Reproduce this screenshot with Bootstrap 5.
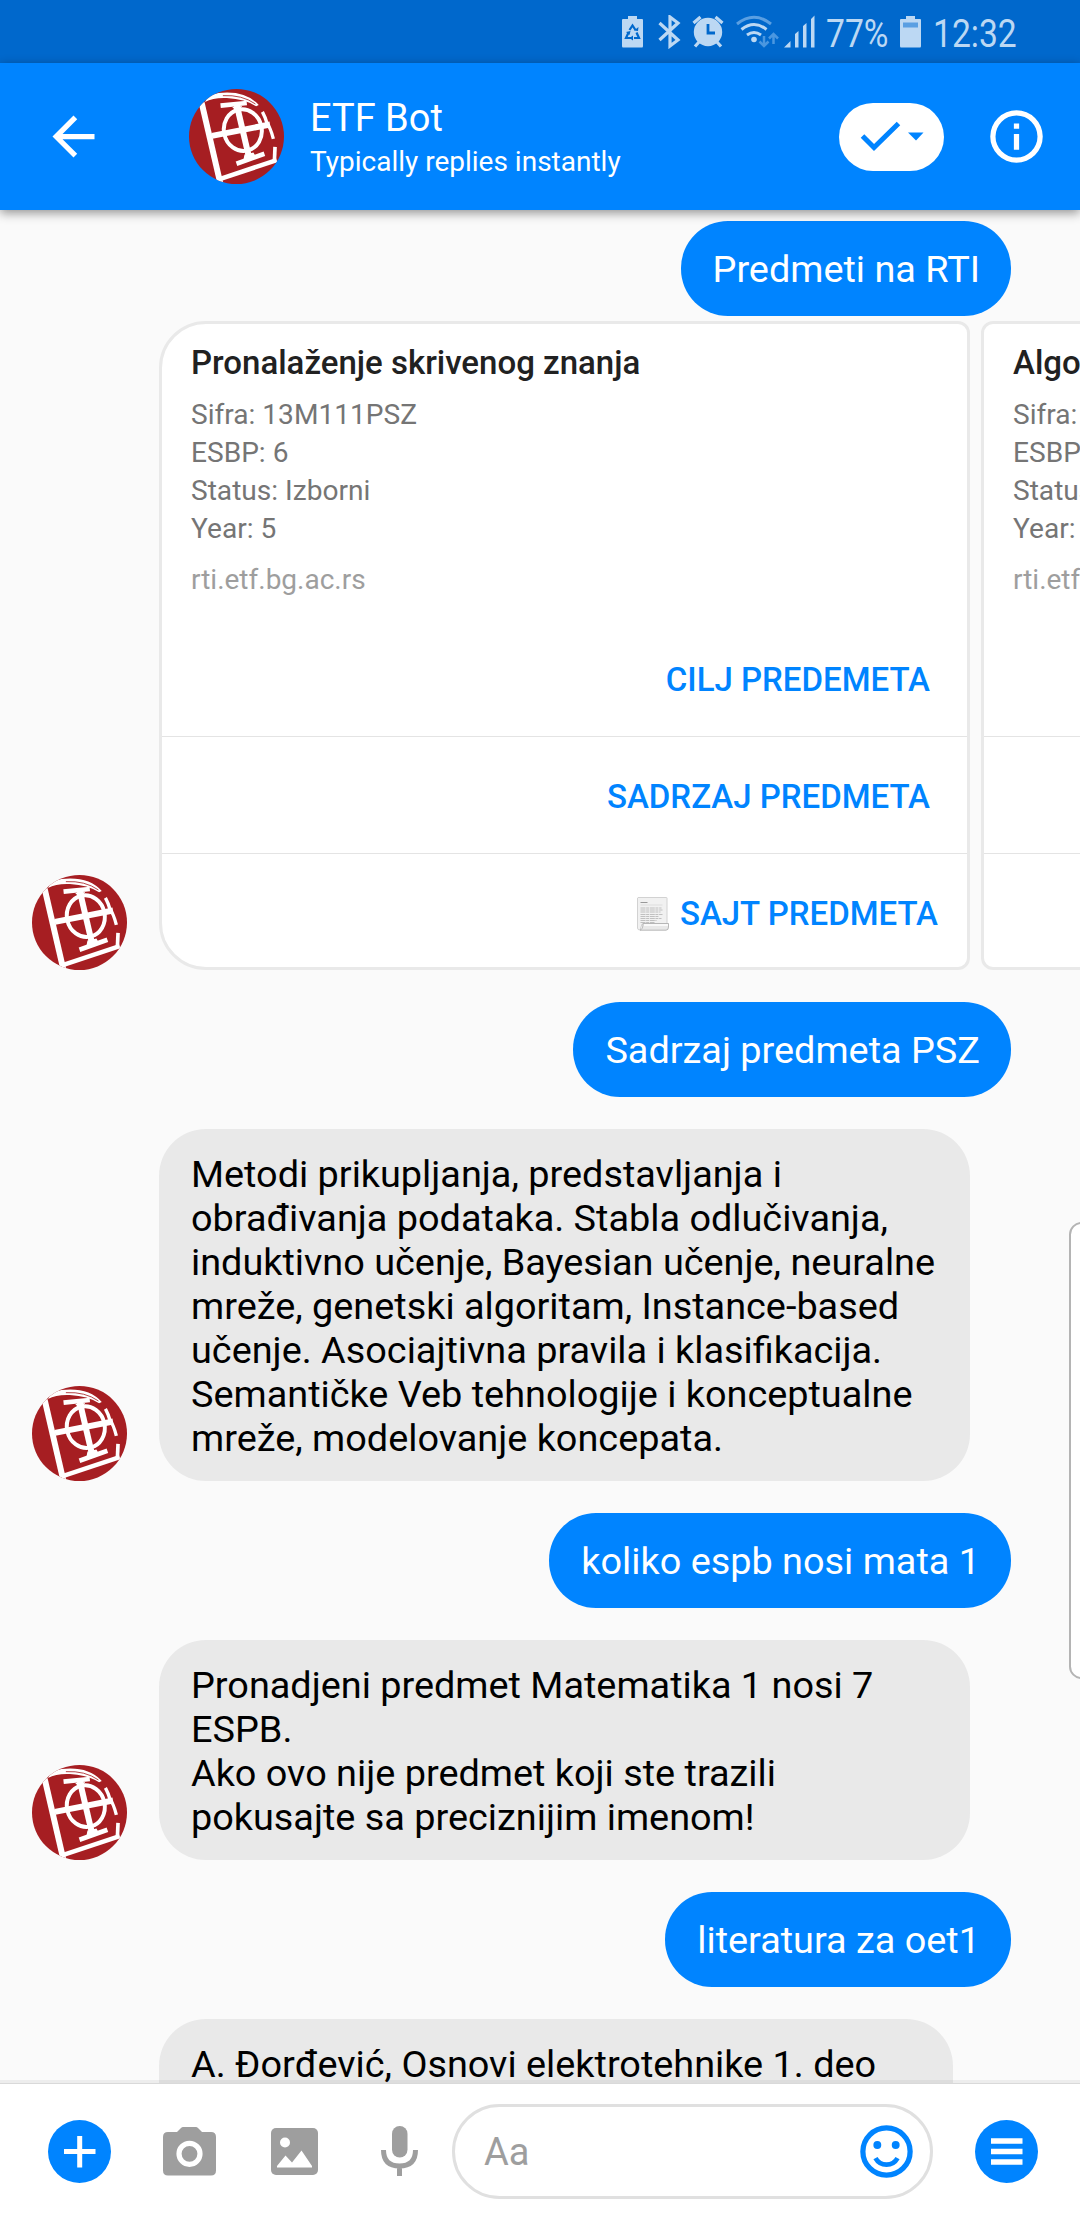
<!DOCTYPE html>
<html lang="sr-Latn">
<head>
<meta charset="utf-8">
<meta name="viewport" content="width=device-width, initial-scale=1">
<title>ETF Bot</title>
<link href="https://cdn.jsdelivr.net/npm/bootstrap@5.3.0/dist/css/bootstrap.min.css" rel="stylesheet">
<style>
  :root { --brand: #0084ff; }
  html, body { height: 2220px; }
  body { font-family: Roboto, "Noto Sans", sans-serif; background: #fafafa; color: #000; width: 1080px; overflow: hidden; }
  svg { display: block; flex: none; }
  .status-strip { height: 63px; background: #0068cc; color: #bcd8f3; padding-right: 64px; }
  .status-text { font-size: 38px; line-height: 44px; transform: scaleX(.885); transform-origin: left center; white-space: nowrap; padding-top: 4px; }
  .st-pct { width: 66px; margin-left: 11px; }
  .st-batt { margin-left: 8px; }
  .st-time { width: 83px; margin-left: 12px; }
  .topbar { height: 147px; background: var(--brand); box-shadow: 0 3px 10px rgba(0,0,0,.42); z-index: 5; padding: 0 32px 0 42px; }
  .bot-pic { width: 95px; height: 95px; }
  .topbar .bot-pic { margin-left: 84px; }
  .who { margin-left: 26px; padding-top: 1px; }
  .who-name { font-size: 38px; line-height: 44px; }
  .who-sub { font-size: 28px; line-height: 34px; margin-top: 5px; }
  .check-pill { width: 105px; height: 68px; border-radius: 34px; margin-right: 41px; }
  .feed { padding-top: 11px; gap: 32px; overflow: hidden; flex: 1 1 0; min-height: 0; }
  .msg { font-size: 37.85px; line-height: 44px; padding: 23px 31px 21px 32px; border-radius: 47px; white-space: nowrap; flex: none; }
  .msg-out { background: var(--brand); color: #fff; margin-right: 69px; height: 95px; padding: 26px 31px 0 32px; }
  .msg-in { background: #e9e9e9; width: 811px; }
  .msg-narrow { width: 794px; }
  .in-row { padding-left: 32px; gap: 32px; flex: none; }
  .carousel-row { margin-top: -27px; }
  .tiles { gap: 11px; overflow: hidden; flex: 1 1 0; min-width: 0; }
  .course { width: 811px; height: 649px; flex: none; background: #fff; border: 3px solid #e9e9e9; border-radius: 12px; }
  .course-first { border-top-left-radius: 47px; border-bottom-left-radius: 47px; }
  .course-text { height: 295px; padding: 19px 29px 0; }
  .course-title { font-size: 33px; line-height: 40px; font-weight: 500; color: #212121; margin-bottom: 13px; }
  .course-info { font-size: 28.1px; line-height: 38px; color: #757575; margin-bottom: 13px; }
  .course-link { font-size: 28px; line-height: 38px; color: #9e9e9e; }
  .course-btn { height: 117px; font-size: 33px; font-weight: 500; color: var(--brand); padding: 4px 37px 0 0; flex: none; }
  .course-btn + .course-btn { border-top: 1px solid #e4e4e4; padding-top: 3px; }
  .course-btn:last-child { height: 114px; padding: 6px 29px 0 0; gap: 11px; }
  .composer { height: 137px; background: #fff; border-top: 1px solid #d9d9d9; box-shadow: 0 -3px 0 rgba(0,0,0,.05); padding: 0 42px 2px 48px; z-index: 5; }
  .tool-camera { margin-left: 52px; }
  .tool-photo { margin-left: 55px; }
  .tool-mic { margin-left: 63px; }
  .entry { width: 481px; height: 95px; border: 3px solid #e0e0e0; border-radius: 48px; margin-left: 34px; padding: 0 12px 0 29px; color: #9e9e9e; font-size: 38px; }
  .entry span { padding-top: 2px; }
  .edge-handle { position: absolute; right: -14px; top: 1222px; width: 25px; height: 457px; background: #fff; border: 2px solid #b4b4b4; border-radius: 14px; z-index: 6; }
</style>
<script src="https://cdn.jsdelivr.net/npm/bootstrap@5.3.0/dist/js/bootstrap.bundle.min.js"></script>
</head>
<body class="d-flex flex-column position-relative">

<svg width="0" height="0" class="position-absolute">
  <defs>
    <clipPath id="disc"><circle cx="179" cy="186" r="143"/></clipPath>
    <symbol id="logo" viewBox="36 43 286 286">
      <g clip-path="url(#disc)">
        <rect x="36" y="43" width="286" height="286" fill="#a61e22"/>
        <path d="M84 82Q94 60 125 55Q206 46 246 91L238 95Q205 73 150 70Q110 68 84 82Z" fill="#fff"/>
        <path d="M138 63Q196 60 236 88" fill="none" stroke="#a61e22" stroke-width="2.500"/>
        <g fill="none" stroke="#fff">
          <path d="M74 84L131 330" stroke-width="18"/>
          <path d="M126 315L300 257" stroke-width="14"/>
          <path d="M293 262L295 217" stroke-width="11"/>
          <ellipse cx="198" cy="167" rx="57" ry="63" stroke-width="12" transform="rotate(-12 198 167)"/>
          <path d="M180 92L217 250" stroke-width="18"/>
          <path d="M131 93L210 85" stroke-width="14"/>
          <path d="M179 268L263 238" stroke-width="14"/>
          <path d="M105 184L280 150" stroke-width="18"/>
          <path d="M257 112Q266 128 272 150Q280 156 290 193" stroke-width="10"/>
        </g>
        <path d="M166 97L196 94L189 106L176 108ZM203 240L230 234L236 245L200 256Z" fill="#fff"/>
      </g>
    </symbol>
  </defs>
</svg>

<div class="status-strip d-flex align-items-center justify-content-end flex-shrink-0">
  <svg width="193" height="34" viewBox="620 15 193 34" fill="#bcd8f3">
    <path d="M626 16h9v3h5q1 0 1 1v26q0 1.500-1 1.500h-19q-1 0-1-1.500V20q0-1 1-1h5z"/>
    <g fill="none" stroke="#0068cc" stroke-width="2.200"><path d="M627.500 30l3-4.500 3 4.500M634.500 32.500l2.500 5.500h-5M629 38h-5l2.500-5.500"/></g>
    <path d="M631 35.500v5l-3.500-2.500zM624 32l4.500-1-1 4zM632 30.500l4 .5.5-4z" fill="#0068cc"/>
    <path d="M657.500 23L676 40l-8 6V17l8 6-18.500 17" fill="none" stroke="#bcd8f3" stroke-width="3.200"/>
    <circle cx="706" cy="32" r="14.200"/>
    <path d="M691.500 23l7-6M720.500 23l-7-6M697 42l-4 4.500M715 42l4 4.500" stroke="#bcd8f3" stroke-width="3.200"/>
    <path d="M706 24v9h7" fill="none" stroke="#0068cc" stroke-width="2.800"/>
    <g fill="none" stroke="#bcd8f3" stroke-width="3">
      <path d="M735 24q17-13.500 34 0" stroke="#5a9fe2"/>
      <path d="M739.500 29.500q12.500-10 25 0M745 35q7-5 14 0"/>
    </g>
    <circle cx="752" cy="39.500" r="2.800"/>
    <path d="M762 36v9M757.500 41.500l4.500 4.500 4.500-4.500M771.500 44v-9M767 38.500l4.500-4.500 4.500 4.500" fill="none" stroke="#4a97e0" stroke-width="2.500"/>
    <path d="M782 47.500l6.500-6.500v6.500zM793 34l3.500-3v16.500H793zM801 26l3.500-3v24.500H801zM809 19l3.500-3.500v32H809z"/>
  </svg>
  <div class="status-text st-pct">77%</div>
  <svg width="21" height="32" viewBox="0 0 21 32" class="st-batt">
    <path d="M6 0h9v3h5q1 0 1 1v26q0 1.500-1 1.500H1Q0 31.500 0 30V4q0-1 1-1h5z" fill="#bcd8f3"/>
    <path d="M3 6.500h15v5H3z" fill="#5a9fe2"/>
  </svg>
  <div class="status-text st-time">12:32</div>
</div>

<header class="topbar d-flex align-items-center position-relative flex-shrink-0 text-white">
  <svg width="63" height="63" viewBox="0 0 24 24" fill="#fff"><path d="M20 11H7.830l5.590-5.590L12 4l-8 8 8 8 1.410-1.410L7.830 13H20z"/></svg>
  <svg class="bot-pic"><use href="#logo"/></svg>
  <div class="who me-auto">
    <div class="who-name">ETF Bot</div>
    <div class="who-sub">Typically replies instantly</div>
  </div>
  <div class="check-pill bg-white d-flex align-items-center justify-content-center">
    <svg width="64" height="32" viewBox="0 0 64 32"><path d="M2.500 15l11.500 11.500L38.500 2.500" fill="none" stroke="#0084ff" stroke-width="5"/><path d="M48 11.500h15.500L56 19.500z" fill="#0084ff"/></svg>
  </div>
  <svg width="63" height="63" viewBox="0 0 24 24" fill="#fff"><path d="M11 7h2v2h-2zm0 4h2v6h-2zm1-9a10 10 0 1 0 0 20 10 10 0 0 0 0-20zm0 18a8 8 0 1 1 0-16 8 8 0 0 1 0 16z"/></svg>
</header>

<main class="feed d-flex flex-column">
  <div class="msg msg-out align-self-end">Predmeti na RTI</div>

  <div class="in-row carousel-row d-flex align-items-end">
    <svg class="bot-pic"><use href="#logo"/></svg>
    <div class="tiles d-flex">
      <div class="course course-first d-flex flex-column">
        <div class="course-text">
          <div class="course-title">Pronalaženje skrivenog znanja</div>
          <div class="course-info">Sifra: 13M111PSZ<br>ESBP: 6<br>Status: Izborni<br>Year: 5</div>
          <div class="course-link">rti.etf.bg.ac.rs</div>
        </div>
        <div class="course-btn d-flex align-items-center justify-content-end">CILJ PREDEMETA</div>
        <div class="course-btn d-flex align-items-center justify-content-end">SADRZAJ PREDMETA</div>
        <div class="course-btn d-flex align-items-center justify-content-end">
          <svg width="32" height="34" viewBox="0 0 32 34">
            <path d="M1 .5h28.500q.5 0 .5.500v26H5L3 33Q.5 33 .5 31V1z" fill="#f1f1f1" stroke="#d2d2d2"/>
            <path d="M3.500 5.500h7" stroke="#999" stroke-width="1"/>
            <path d="M3.500 8h22" stroke="#ddd"/>
            <path d="M3.500 11h21M3.500 13h22M3.500 15h20M3.500 17.500h22M3.500 19.500h18M3.500 21.500h21M3.500 23.500h16M3.500 25.500h14" stroke="#b4b4b4" stroke-width=".8" stroke-dasharray="5 .6 3 .7"/>
            <path d="M6 26.500h25.500v3.500q0 3.200-2.500 3.200H3q3-1 3-6.700z" fill="#e8e8e8" stroke="#aaa" stroke-width=".8"/>
            <path d="M7 28h24" stroke="#fff" stroke-width="1.500"/>
          </svg>
          <span>SAJT PREDMETA</span>
        </div>
      </div>
      <div class="course d-flex flex-column">
        <div class="course-text">
          <div class="course-title">Algo</div>
          <div class="course-info">Sifra:<br>ESBP:<br>Status:<br>Year:</div>
          <div class="course-link">rti.etf</div>
        </div>
        <div class="course-btn"></div>
        <div class="course-btn"></div>
        <div class="course-btn"></div>
      </div>
    </div>
  </div>

  <div class="msg msg-out align-self-end">Sadrzaj predmeta PSZ</div>

  <div class="in-row d-flex align-items-end">
    <svg class="bot-pic"><use href="#logo"/></svg>
    <div class="msg msg-in">Metodi prikupljanja, predstavljanja i<br>obrađivanja podataka. Stabla odlučivanja,<br>induktivno učenje, Bayesian učenje, neuralne<br>mreže, genetski algoritam, Instance-based<br>učenje. Asociajtivna pravila i klasifikacija.<br>Semantičke Veb tehnologije i konceptualne<br>mreže, modelovanje koncepata.</div>
  </div>

  <div class="msg msg-out align-self-end">koliko espb nosi mata 1</div>

  <div class="in-row d-flex align-items-end">
    <svg class="bot-pic"><use href="#logo"/></svg>
    <div class="msg msg-in">Pronadjeni predmet Matematika 1 nosi 7<br>ESPB.<br>Ako ovo nije predmet koji ste trazili<br>pokusajte sa preciznijim imenom!</div>
  </div>

  <div class="msg msg-out align-self-end">literatura za oet1</div>

  <div class="in-row d-flex align-items-end">
    <div class="bot-pic flex-shrink-0"></div>
    <div class="msg msg-in msg-narrow">A. Đorđević, Osnovi elektrotehnike 1. deo<br>&nbsp;</div>
  </div>
</main>

<footer class="composer d-flex align-items-center position-relative flex-shrink-0">
  <svg width="63" height="63" viewBox="0 0 63 63"><circle cx="31.500" cy="31.500" r="31.500" fill="#0084ff"/><path d="M16 31.500h31.500M31.700 16v31.500" stroke="#fff" stroke-width="5"/></svg>
  <svg width="53" height="49" viewBox="0 0 53 49" class="tool-camera"><path d="M5 5h9l4-4q1-1 2-1h13q1 0 2 1l4 4h9q5 0 5 5v33.500q0 5-5 5H5q-5 0-5-5V10q0-5 5-5z" fill="#9e9e9e"/><circle cx="26.500" cy="26.800" r="10.500" fill="none" stroke="#fff" stroke-width="5.200"/></svg>
  <svg width="47" height="47" viewBox="0 0 47 47" class="tool-photo"><rect width="47" height="47" rx="5" fill="#9e9e9e"/><circle cx="14" cy="14.500" r="5" fill="#fff"/><path d="M6 39.500v-1.500l8.500-10.500 6.500 7 9.500-12L41 38v1.500z" fill="#fff"/></svg>
  <svg width="37" height="50" viewBox="0 0 37 50" class="tool-mic"><rect x="11" width="15.500" height="31.500" rx="7.700" fill="#9e9e9e"/><path d="M2.500 24q0 16 16 16t16-16M18.500 40v10" fill="none" stroke="#9e9e9e" stroke-width="5"/></svg>
  <div class="entry d-flex align-items-center justify-content-between"><span>Aa</span>
    <svg width="63" height="63" viewBox="0 0 24 24"><circle cx="12" cy="12" r="9" fill="none" stroke="#0084ff" stroke-width="2"/><circle cx="8.500" cy="9.500" r="1.500" fill="#0084ff"/><circle cx="15.500" cy="9.500" r="1.500" fill="#0084ff"/><path d="M7.800 14.500q1.400 2.500 4.200 2.500t4.200-2.500" fill="none" stroke="#0084ff" stroke-width="1.800"/></svg>
  </div>
  <svg width="63" height="63" viewBox="0 0 63 63" class="ms-auto"><circle cx="31.500" cy="31.500" r="31.500" fill="#0084ff"/><path d="M16 21h31.500M16 31.500h31.500M16 42h31.500" stroke="#fff" stroke-width="5.500"/></svg>
</footer>

<div class="edge-handle"></div>
</body>
</html>
